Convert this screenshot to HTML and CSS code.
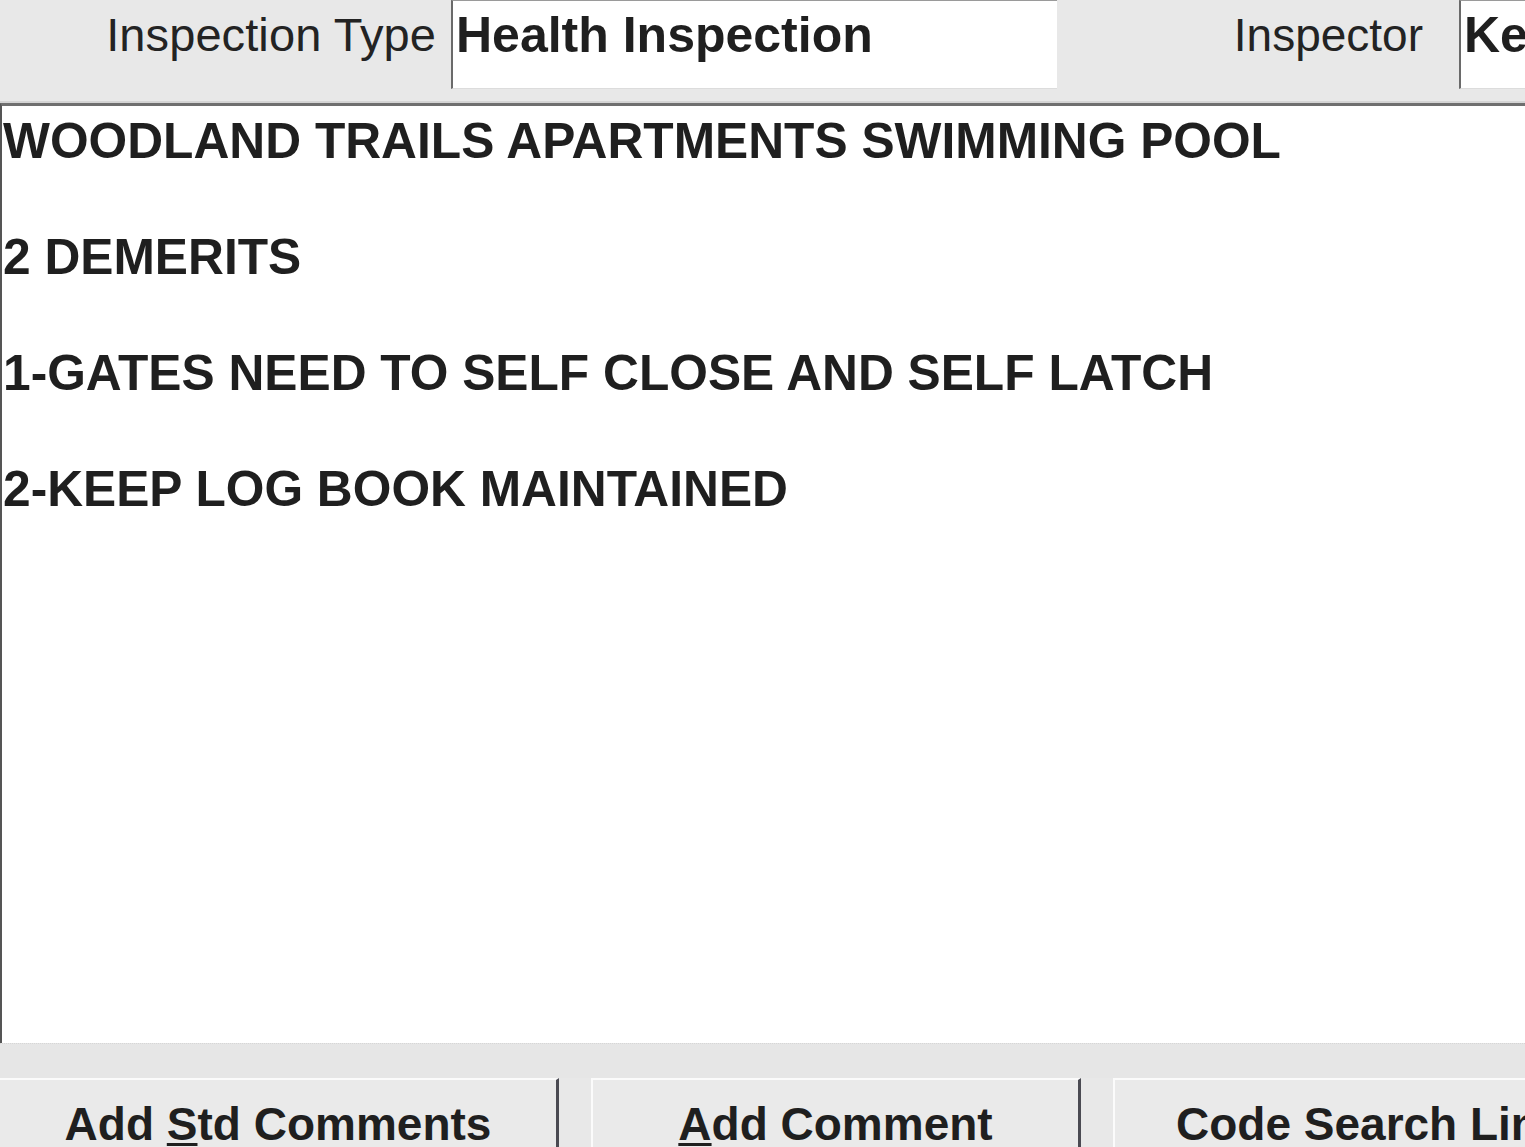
FILE: index.html
```html
<!DOCTYPE html>
<html>
<head>
<meta charset="utf-8">
<title>Inspection Comments</title>
<link rel="stylesheet" href="styles.css">
</head>
<body>
<div class="screen">
  <div class="top-row">
    <label class="field-label label-type">Inspection Type</label>
    <div class="field field-type">Health Inspection</div>
    <label class="field-label label-inspector">Inspector</label>
    <div class="field field-inspector">Ke</div>
  </div>
  <div class="comments">
    <p>WOODLAND TRAILS APARTMENTS SWIMMING POOL</p>
    <p>2 DEMERITS</p>
    <p>1-GATES NEED TO SELF CLOSE AND SELF LATCH</p>
    <p>2-KEEP LOG BOOK MAINTAINED</p>
  </div>
  <div class="band"></div>
  <div class="buttons">
    <div class="btn btn-std"><span>Add <u>S</u>td Comments</span></div>
    <div class="btn btn-add"><span><u>A</u>dd Comment</span></div>
    <div class="btn btn-code"><span>Code Search Link</span></div>
  </div>
</div>
</body>
</html>
```

FILE: styles.css
```css
html, body {
  margin: 0;
  padding: 0;
  overflow: hidden;
}
body {
  background: #e8e8e8;
  font-family: "Liberation Sans", Arial, sans-serif;
  color: #222;
}
.screen {
  width: 1525px;
  height: 1147px;
  display: flex;
  flex-direction: column;
  overflow: hidden;
}
.top-row {
  height: 103px;
  display: flex;
  align-items: flex-start;
  flex-shrink: 0;
}
.field-label {
  font-size: 46px;
  line-height: 58px;
  padding-top: 6px;
  text-align: right;
  color: #232323;
  white-space: nowrap;
  box-sizing: border-box;
  flex-shrink: 0;
}
.label-type {
  width: 436px;
  margin-right: 15px;
  font-size: 47px;
  letter-spacing: 0.1px;
}
.label-inspector {
  width: 366px;
  margin-right: 36px;
}
.field {
  background: #fff;
  border-left: 2px solid #6a6a6a;
  border-top: 1px solid #9a9a9a;
  border-bottom: 1px solid #dcdcdc;
  box-sizing: content-box;
  font-size: 50px;
  font-weight: bold;
  line-height: 58px;
  padding: 5px 0 0 3px;
  height: 82px;
  white-space: nowrap;
  overflow: hidden;
  color: #1f1f1f;
}
.field-type {
  width: 601px;
  flex-shrink: 0;
}
.field-inspector {
  flex: 1;
}
.comments {
  height: 931px;
  flex-shrink: 0;
  background: #fff;
  border-top: 3px solid #6f6f6f;
  border-left: 2px solid #555;
  padding: 6px 0 0 1px;
  font-size: 49.7px;
  font-weight: bold;
  line-height: 58px;
  color: #1f1f1f;
  white-space: nowrap;
  box-shadow: 0 -2px 0 #d4d4d4;
}
.comments p {
  margin: 0 0 58px 0;
}
.band {
  height: 34px;
  flex-shrink: 0;
  background: #e6e6e6;
  border-top: 1px dotted #d6d6d6;
}
.buttons {
  display: flex;
  gap: 32px;
  flex-shrink: 0;
}
.btn {
  height: 80px;
  flex-shrink: 0;
  box-sizing: border-box;
  background: #eaeaea;
  border-top: 2px solid #fbfbfb;
  border-left: 2px solid #fbfbfb;
  border-right: 3px solid #4a4a52;
  font-size: 46px;
  font-weight: bold;
  line-height: 58px;
  padding-top: 15px;
  display: flex;
  justify-content: center;
  white-space: nowrap;
  color: #1f1f1f;
}
.btn u {
  text-decoration-thickness: 3px;
  text-underline-offset: 3px;
}
.btn-std {
  width: 559px;
  border-left: none;
}
.btn-add {
  width: 490px;
}
.btn-code {
  width: 520px;
  justify-content: flex-start;
  padding-left: 61px;
}
```
